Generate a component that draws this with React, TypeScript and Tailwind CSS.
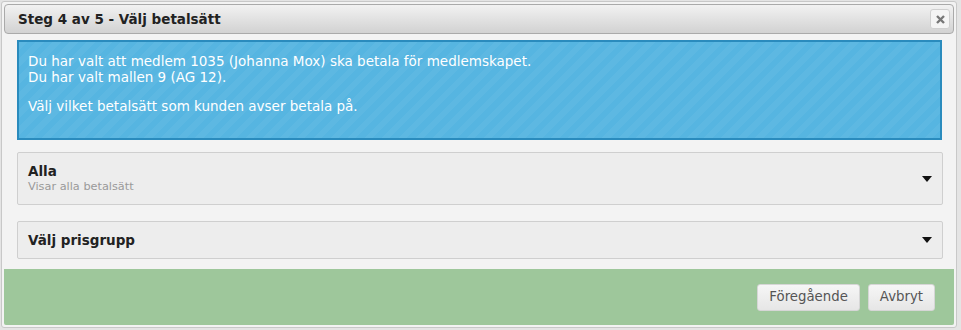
import { ReactNode } from "react";

function SelectBox({ title, sub }: { title: string; sub?: string }) {
    return (
        <div className="flex items-center justify-between border border-[#cfcfcf] bg-[#ededed] px-[10px] rounded-[2px]">
            <div className={sub ? "pt-[9px] pb-[10px]" : "py-[9px]"}>
                <div className="font-bold text-[13.5px] leading-[18px] text-[#222]">{title}</div>
                {sub && <div className="text-[11.3px] leading-[14px] text-[#9a9a9a]">{sub}</div>}
            </div>
            <svg width="10" height="6" viewBox="0 0 10 6">
                <path d="M0 0 H10 L5 6 Z" fill="#111" />
            </svg>
        </div>
    );
}

function Btn({ children }: { children: ReactNode }) {
    return (
        <button className="h-[27px] px-[11px] rounded-[3px] border border-[#d6d6d6] bg-gradient-to-b from-[#f6f6f6] to-[#e6e6e6] text-[13.3px] text-[#555]">
            {children}
        </button>
    );
}

export default function App() {
    return (
        <div
            className="w-[961px] h-[330px] bg-[#e4e4e4] p-[1px] pr-[4px]"
            style={{ fontFamily: "Verdana, 'DejaVu Sans', sans-serif" }}
        >
            <div className="h-[327px] border border-[#c8c8c8] bg-[#f3f3f3] p-[2px] rounded-[3px] flex flex-col">
                <div className="h-[30px] flex items-center justify-between border border-[#aaaaaa] rounded-[4px] bg-gradient-to-b from-[#f2f2f2] to-[#d2d2d2] pl-[13px] pr-[3px]">
                    <span className="font-bold text-[13.5px] text-[#222]">Steg 4 av 5 - Välj betalsätt</span>
                    <div className="w-[20px] h-[20px] flex items-center justify-center rounded-[3px] border border-[#d0d0d0] bg-[#f4f4f4]">
                        <svg width="9" height="9" viewBox="0 0 9 9">
                            <path d="M1 1 L8 8 M8 1 L1 8" stroke="#777" strokeWidth="2.4" />
                        </svg>
                    </div>
                </div>
                <div className="flex-1 flex flex-col pl-[13px] pr-[11px] pt-[6px] gap-[12px]">
                    <div className="h-[100px] mr-[1px] border-2 border-[#2a8bbd] bg-[#56b5e1] bg-[repeating-linear-gradient(135deg,rgba(255,255,255,0.045)_0px,rgba(255,255,255,0.045)_6px,transparent_6px,transparent_12px)] px-[9px] pt-[11px] text-white text-[13.5px] leading-[16px]">
                        <p>Du har valt att medlem 1035 (Johanna Mox) ska betala för medlemskapet.</p>
                        <p>Du har valt mallen 9 (AG 12).</p>
                        <p className="mt-[13px]">Välj vilket betalsätt som kunden avser betala på.</p>
                    </div>
                    <div className="flex flex-col gap-[16px]">
                        <SelectBox title="Alla" sub="Visar alla betalsätt" />
                        <SelectBox title="Välj prisgrupp" />
                    </div>
                </div>
                <div className="h-[56px] bg-[#9ec79b] flex items-center justify-end gap-[8px] pr-[19px] rounded-b-[2px]">
                    <Btn>Föregående</Btn>
                    <Btn>Avbryt</Btn>
                </div>
            </div>
        </div>
    );
}
